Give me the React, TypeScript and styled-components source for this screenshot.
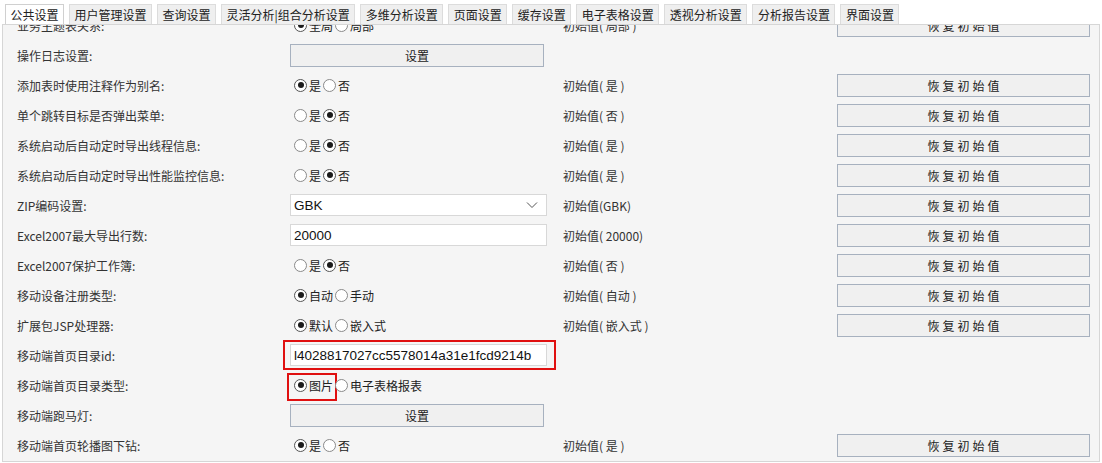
import React from 'react';
import styled, { createGlobalStyle } from 'styled-components';

const GlobalStyle = createGlobalStyle`
  html, body {
    margin: 0;
    padding: 0;
    background: #ffffff;
    overflow: hidden;
  }
  body {
    font-family: "Noto Sans CJK SC", "Liberation Sans", sans-serif;
    font-size: 12px;
    color: #333;
  }
`;

const Page = styled.div`
  width: 1102px;
  height: 463px;
  display: flex;
  flex-direction: column;
  background: #fff;
`;

const TabBar = styled.div`
  display: flex;
  align-items: flex-end;
  gap: 5px;
  height: 24px;
  padding: 0 0 0 5px;
  box-sizing: border-box;
  background: #fff;
  position: relative;
  z-index: 1;
`;

const Tab = styled.div<{ $active?: boolean }>`
  height: 20px;
  padding: 0 4.5px;
  display: flex;
  align-items: center;
  box-sizing: border-box;
  border: 1px solid ${p => (p.$active ? '#d0d0d0' : '#dcdcdc')};
  border-bottom: none;
  background: ${p => (p.$active ? '#ffffff' : '#efefef')};
  font-size: 12px;
  color: #222;
  white-space: nowrap;
`;

const Panel = styled.div`
  flex: 1;
  margin: 0 2px 1px 2px;
  border: 1px solid #d6d6d6;
  background: #f5f5f5;
  overflow: hidden;
  position: relative;
`;

const Rows = styled.div`
  margin-top: -15px;
  padding-left: 14px;
  display: flex;
  flex-direction: column;
`;

const Row = styled.div`
  height: 30px;
  display: grid;
  grid-template-columns: 273px 273px 274px 253px;
  align-items: center;
`;

const Label = styled.div`
  color: #333;
  white-space: nowrap;
`;

const Cell = styled.div`
  display: flex;
  align-items: center;
`;

const InitText = styled.div`
  color: #333;
  white-space: nowrap;
`;

const GrayButton = styled.button`
  height: 23px;
  box-sizing: border-box;
  border: 1px solid #a7b1bf;
  background: #f0f0f0;
  font-family: "Noto Sans CJK SC", sans-serif;
  font-size: 12px;
  color: #222;
  padding: 0;
  cursor: pointer;
`;

const SetButton = styled(GrayButton)`
  width: 254px;
`;

const RestoreButton = styled(GrayButton)`
  width: 253px;
  letter-spacing: 3px;
  text-indent: 3px;
`;

const TextBox = styled.div`
  width: 257px;
  height: 22px;
  box-sizing: border-box;
  border: 1px solid #d8d8d8;
  background: #fff;
  display: flex;
  align-items: center;
  justify-content: space-between;
  padding: 0 8px 0 3px;
  font-family: "Liberation Sans", Arial, sans-serif;
  font-size: 13.5px;
  color: #111;
`;

const RadioGroup = styled.div`
  display: flex;
  align-items: center;
  gap: 2px;
  padding-left: 4px;
`;

const RadioOption = styled.label`
  display: inline-flex;
  align-items: center;
  gap: 2px;
  color: #222;
  white-space: nowrap;
  position: relative;
`;

const Circle = styled.span<{ $checked?: boolean }>`
  width: 13px;
  height: 13px;
  box-sizing: border-box;
  border-radius: 50%;
  border: 1px solid ${p => (p.$checked ? '#555' : '#8a8a8a')};
  background: #fff;
  display: inline-flex;
  align-items: center;
  justify-content: center;

  &::after {
    content: '';
    width: 6px;
    height: 6px;
    border-radius: 50%;
    background: ${p => (p.$checked ? '#1a1a1a' : 'transparent')};
  }
`;

const Marked = styled.div<{ $inset: string }>`
  position: relative;
  display: inline-flex;

  &::after {
    content: '';
    position: absolute;
    inset: ${p => p.$inset};
    border: 2px solid #e01010;
    pointer-events: none;
  }
`;

const Chevron = () => (
  <svg width="12" height="8" viewBox="0 0 12 8">
    <path d="M1 1.5 L6 6.5 L11 1.5" fill="none" stroke="#555" strokeWidth="1" />
  </svg>
);

type Option = { text: string; checked?: boolean; marked?: boolean };

const Radios: React.FC<{ options: Option[] }> = ({ options }) => (
  <RadioGroup>
    {options.map(o => {
      const item = (
        <RadioOption key={o.text}>
          <Circle $checked={o.checked} />
          {o.text}
        </RadioOption>
      );
      return o.marked ? (
        <Marked key={o.text} $inset="-4px -4px -7px -7px">
          {item}
        </Marked>
      ) : (
        item
      );
    })}
  </RadioGroup>
);

type RowData = {
  label: string;
  radios?: Option[];
  setting?: boolean;
  select?: string;
  input?: string;
  marked?: boolean;
  init?: string;
};

const yesNo = (yes: boolean): Option[] => [
  { text: '是', checked: yes },
  { text: '否', checked: !yes },
];

const rows: RowData[] = [
  { label: '业务主题表关系:', radios: [{ text: '全局', checked: true }, { text: '局部' }], init: '初始值( 局部 )' },
  { label: '操作日志设置:', setting: true },
  { label: '添加表时使用注释作为别名:', radios: yesNo(true), init: '初始值( 是 )' },
  { label: '单个跳转目标是否弹出菜单:', radios: yesNo(false), init: '初始值( 否 )' },
  { label: '系统启动后自动定时导出线程信息:', radios: yesNo(false), init: '初始值( 是 )' },
  { label: '系统启动后自动定时导出性能监控信息:', radios: yesNo(false), init: '初始值( 是 )' },
  { label: 'ZIP编码设置:', select: 'GBK', init: '初始值(GBK)' },
  { label: 'Excel2007最大导出行数:', input: '20000', init: '初始值( 20000)' },
  { label: 'Excel2007保护工作簿:', radios: yesNo(false), init: '初始值( 否 )' },
  { label: '移动设备注册类型:', radios: [{ text: '自动', checked: true }, { text: '手动' }], init: '初始值( 自动 )' },
  { label: '扩展包JSP处理器:', radios: [{ text: '默认', checked: true }, { text: '嵌入式' }], init: '初始值( 嵌入式 )' },
  { label: '移动端首页目录id:', input: 'l4028817027cc5578014a31e1fcd9214b', marked: true },
  { label: '移动端首页目录类型:', radios: [{ text: '图片', checked: true, marked: true }, { text: '电子表格报表' }] },
  { label: '移动端跑马灯:', setting: true },
  { label: '移动端首页轮播图下钻:', radios: yesNo(true), init: '初始值( 是 )' },
];

const tabs = [
  '公共设置',
  '用户管理设置',
  '查询设置',
  '灵活分析|组合分析设置',
  '多维分析设置',
  '页面设置',
  '缓存设置',
  '电子表格设置',
  '透视分析设置',
  '分析报告设置',
  '界面设置',
];

const Control: React.FC<{ row: RowData }> = ({ row }) => {
  if (row.radios) return <Radios options={row.radios} />;
  if (row.setting) return <SetButton>设置</SetButton>;
  if (row.select)
    return (
      <TextBox>
        {row.select}
        <Chevron />
      </TextBox>
    );
  if (row.input) {
    const box = <TextBox>{row.input}</TextBox>;
    return row.marked ? <Marked $inset="-4px -9px -4px -7px">{box}</Marked> : box;
  }
  return null;
};

export default function App() {
  return (
    <Page>
      <GlobalStyle />
      <TabBar>
        {tabs.map((t, i) => (
          <Tab key={t} $active={i === 0}>
            {t}
          </Tab>
        ))}
      </TabBar>
      <Panel>
        <Rows>
          {rows.map(r => (
            <Row key={r.label}>
              <Label>{r.label}</Label>
              <Cell>
                <Control row={r} />
              </Cell>
              <InitText>{r.init}</InitText>
              <Cell>{r.init && <RestoreButton>恢复初始值</RestoreButton>}</Cell>
            </Row>
          ))}
        </Rows>
      </Panel>
    </Page>
  );
}
